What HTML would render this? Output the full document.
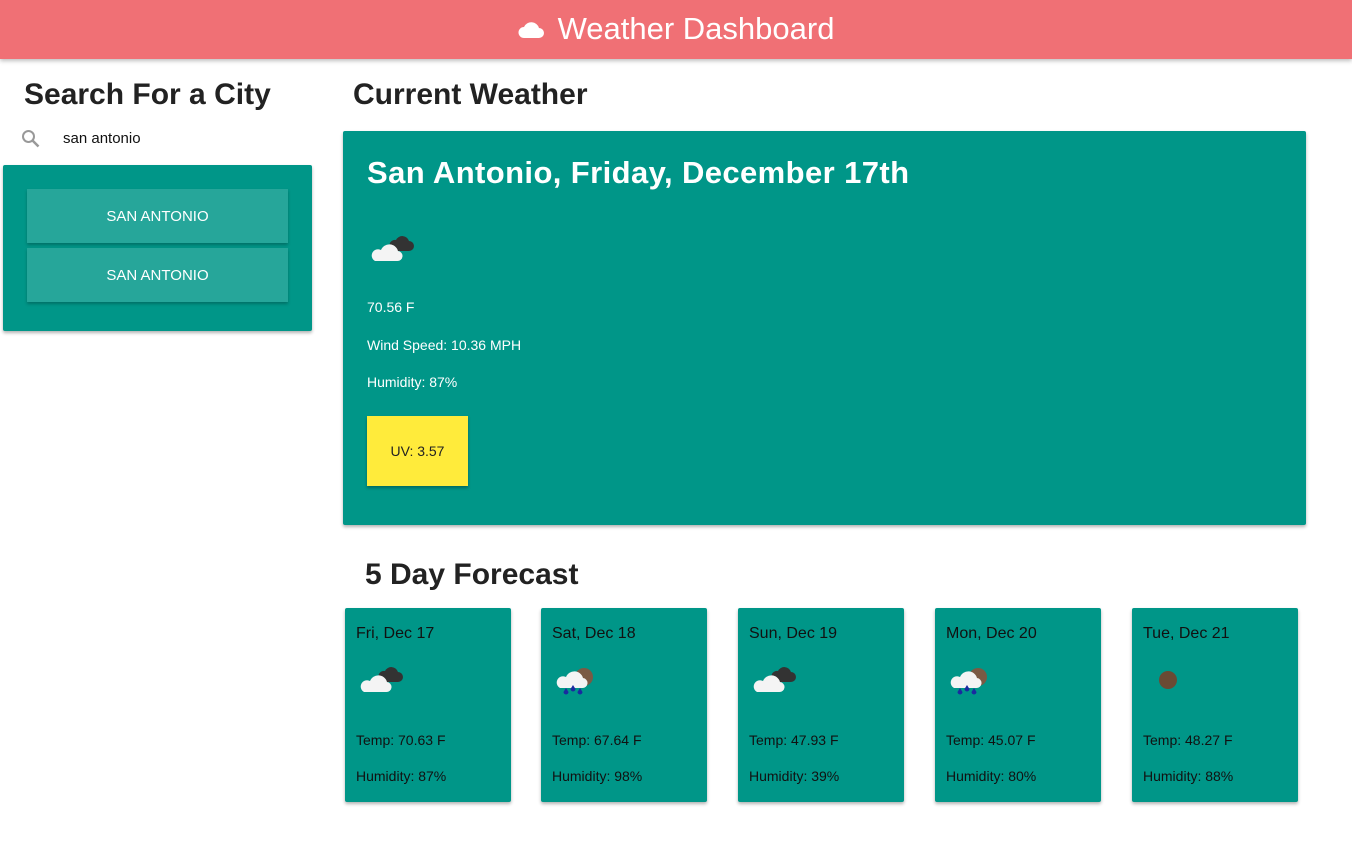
<!DOCTYPE html>
<html><head><meta charset="utf-8"><style>
*{box-sizing:border-box;margin:0;padding:0}
body{width:1352px;height:852px;background:#fff;font-family:"Liberation Sans",sans-serif;position:relative;overflow:hidden;color:#222}
.hdr{position:absolute;left:0;top:0;width:1352px;height:59px;background:#f07075;box-shadow:0 2px 4px rgba(0,0,0,.25);color:#fff;font-size:31px;text-align:center;line-height:58px}
.abs{position:absolute}
h2{position:absolute;font-size:30px;font-weight:bold;color:#222;white-space:nowrap}
.card{position:absolute;background:#009688;box-shadow:0 2px 3px rgba(0,0,0,.3);border-radius:2px}
.btn{position:absolute;left:24px;width:261px;height:54px;background:#26a69a;color:#fff;font-size:15px;text-align:center;line-height:56px;box-shadow:0 2px 3px rgba(0,0,0,.25)}
.w{color:#fff;font-size:14px;position:absolute;left:24px}
.fc{position:absolute;top:608px;width:166px;height:194px;background:#009688;box-shadow:0 2px 3px rgba(0,0,0,.3);border-radius:2px;color:#111}
.fc .d{position:absolute;left:11px;top:17px;font-size:16px}
.fc .t{position:absolute;left:11px;top:124px;font-size:14px}
.fc .h{position:absolute;left:11px;top:160px;font-size:14px}
.fc svg{position:absolute;left:14px;top:58px}
</style></head><body>
<div class="hdr"><svg width="26" height="20" viewBox="0 0 26 20" style="vertical-align:-1px;margin-right:14px"><path d="M6 18h15a5 5 0 0 0 0-10 8 8 0 0 0-15-1 5.5 5.5 0 0 0 0 11z" fill="#fff"/></svg>Weather Dashboard</div>
<h2 style="left:24px;top:78px">Search For a City</h2>
<svg class="abs" style="left:21px;top:129px" width="20" height="20" viewBox="0 0 20 20"><circle cx="7.5" cy="7.5" r="5.5" fill="none" stroke="#999" stroke-width="2"/><path d="M11.5 11.5l6 6" stroke="#999" stroke-width="2.5"/></svg>
<div class="abs" style="left:63px;top:130px;font-size:15px;color:#111">san antonio</div>
<div class="card" style="left:3px;top:165px;width:309px;height:166px">
<div class="btn" style="top:24px">SAN ANTONIO</div>
<div class="btn" style="top:83px">SAN ANTONIO</div>
</div>
<h2 style="left:353px;top:78px">Current Weather</h2>
<div class="card" style="left:343px;top:131px;width:963px;height:394px">
<div class="abs" style="left:24px;top:24px;font-size:31px;font-weight:bold;color:#fff;letter-spacing:.4px">San Antonio, Friday, December 17th</div>
<svg class="abs" style="left:27px;top:104px" width="46" height="28" viewBox="0 0 46 28"><path d="M24 16h15a5 5 0 0 0 0-10 7 7 0 0 0-13-1 5 5 0 0 0-2 11z" fill="#333"/><path d="M5 26h22a5 5 0 0 0 1-10 9 9 0 0 0-17-1 6 6 0 0 0-6 11z" fill="#f4f4f4"/></svg>
<div class="w" style="top:168px">70.56 F</div>
<div class="w" style="top:206px">Wind Speed: 10.36 MPH</div>
<div class="w" style="top:243px">Humidity: 87%</div>
<div class="abs" style="left:24px;top:285px;width:101px;height:70px;background:#ffeb3b;box-shadow:0 2px 3px rgba(0,0,0,.3);font-size:14px;text-align:center;line-height:70px;color:#222">UV: 3.57</div>
</div>
<h2 style="left:365px;top:558px">5 Day Forecast</h2>
<div class="fc" style="left:345px"><div class="d">Fri, Dec 17</div><svg width="46" height="28" viewBox="0 0 46 28"><path d="M24 16h15a5 5 0 0 0 0-10 7 7 0 0 0-13-1 5 5 0 0 0-2 11z" fill="#333"/><path d="M5 26h22a5 5 0 0 0 1-10 9 9 0 0 0-17-1 6 6 0 0 0-6 11z" fill="#f4f4f4"/></svg><div class="t">Temp: 70.63 F</div><div class="h">Humidity: 87%</div></div>
<div class="fc" style="left:541px"><div class="d">Sat, Dec 18</div><svg width="46" height="32" viewBox="0 0 46 32"><circle cx="29" cy="11" r="9" fill="#7a5a44"/><path d="M5 22h22a5 5 0 0 0 1-10 9 9 0 0 0-17-1 6 6 0 0 0-6 11z" fill="#f4f4f4"/><path d="M11 22l-2.5 4a2.5 2.5 0 1 0 5 0z M18 19l-2.5 4a2.5 2.5 0 1 0 5 0z M25 22l-2.5 4a2.5 2.5 0 1 0 5 0z" fill="#1a2aa0"/></svg><div class="t">Temp: 67.64 F</div><div class="h">Humidity: 98%</div></div>
<div class="fc" style="left:738px"><div class="d">Sun, Dec 19</div><svg width="46" height="28" viewBox="0 0 46 28"><path d="M24 16h15a5 5 0 0 0 0-10 7 7 0 0 0-13-1 5 5 0 0 0-2 11z" fill="#333"/><path d="M5 26h22a5 5 0 0 0 1-10 9 9 0 0 0-17-1 6 6 0 0 0-6 11z" fill="#f4f4f4"/></svg><div class="t">Temp: 47.93 F</div><div class="h">Humidity: 39%</div></div>
<div class="fc" style="left:935px"><div class="d">Mon, Dec 20</div><svg width="46" height="32" viewBox="0 0 46 32"><circle cx="29" cy="11" r="9" fill="#7a5a44"/><path d="M5 22h22a5 5 0 0 0 1-10 9 9 0 0 0-17-1 6 6 0 0 0-6 11z" fill="#f4f4f4"/><path d="M11 22l-2.5 4a2.5 2.5 0 1 0 5 0z M18 19l-2.5 4a2.5 2.5 0 1 0 5 0z M25 22l-2.5 4a2.5 2.5 0 1 0 5 0z" fill="#1a2aa0"/></svg><div class="t">Temp: 45.07 F</div><div class="h">Humidity: 80%</div></div>
<div class="fc" style="left:1132px"><div class="d">Tue, Dec 21</div><svg width="46" height="30" viewBox="0 0 46 30"><circle cx="22" cy="14" r="9" fill="#6a4a34"/></svg><div class="t">Temp: 48.27 F</div><div class="h">Humidity: 88%</div></div>
</body></html>
